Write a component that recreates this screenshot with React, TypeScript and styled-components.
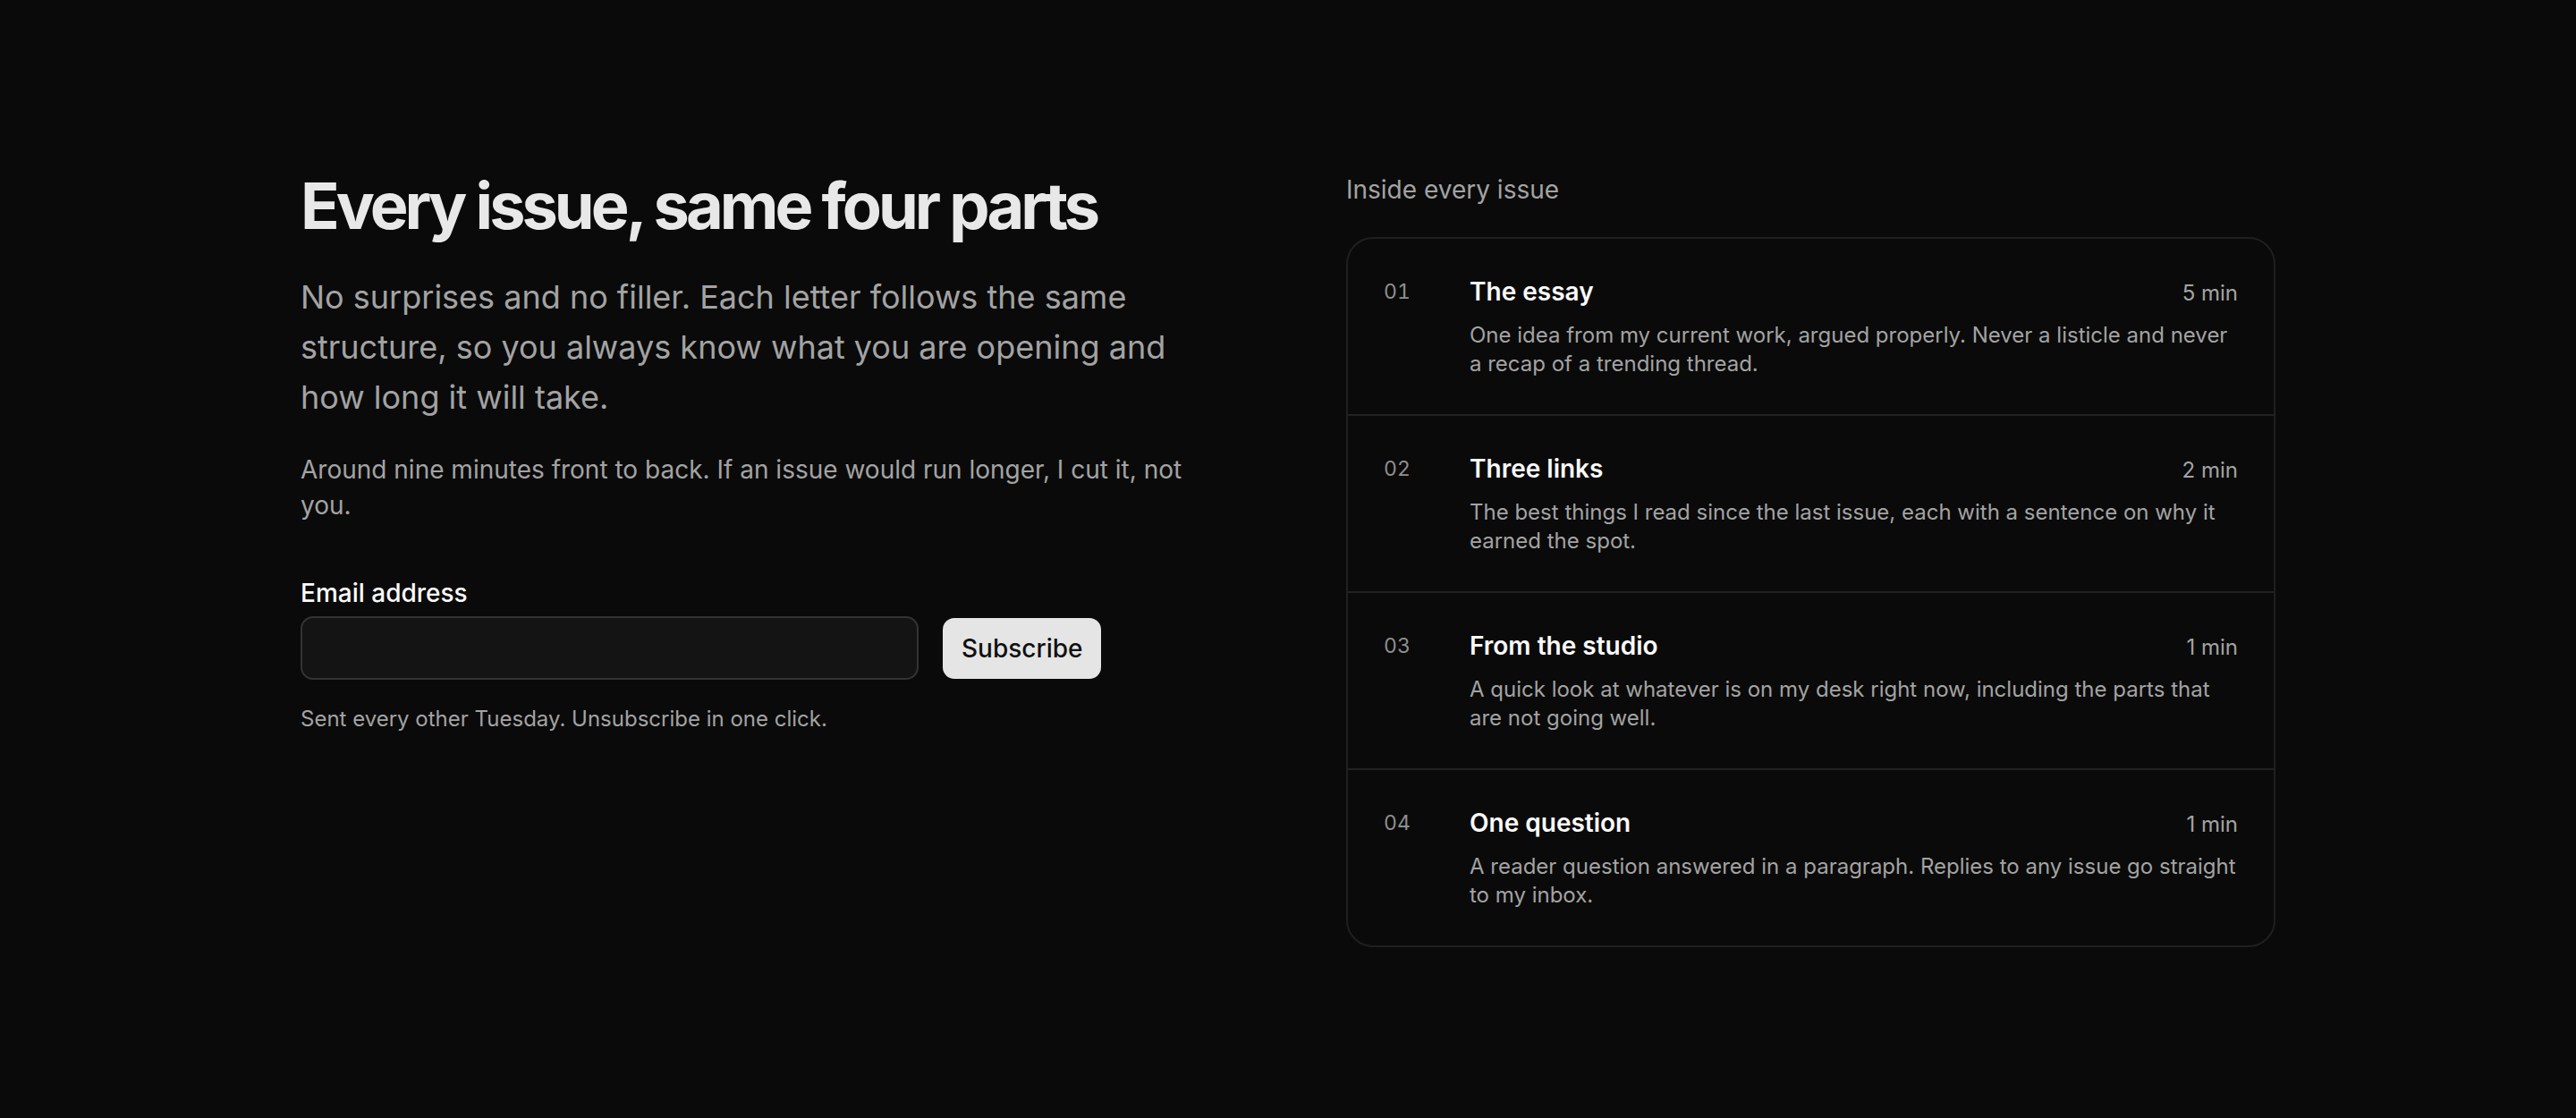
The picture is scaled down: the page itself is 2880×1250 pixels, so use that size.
import styled, { createGlobalStyle } from 'styled-components'

const GlobalStyle = createGlobalStyle`
  * {
    box-sizing: border-box;
  }

  body {
    margin: 0;
    background: #0a0a0a;
    font-family: Inter, "Noto Sans", sans-serif;
    -webkit-font-smoothing: antialiased;
  }
`

const sections = [
  {
    num: '01',
    title: 'The essay',
    time: '5 min',
    text: 'One idea from my current work, argued properly. Never a listicle and never a recap of a trending thread.',
  },
  {
    num: '02',
    title: 'Three links',
    time: '2 min',
    text: 'The best things I read since the last issue, each with a sentence on why it earned the spot.',
  },
  {
    num: '03',
    title: 'From the studio',
    time: '1 min',
    text: 'A quick look at whatever is on my desk right now, including the parts that are not going well.',
  },
  {
    num: '04',
    title: 'One question',
    time: '1 min',
    text: 'A reader question answered in a paragraph. Replies to any issue go straight to my inbox.',
  },
]

const Page = styled.main`
  min-height: 100vh;
  padding: 190px 0 120px;
`

const Layout = styled.div`
  width: 2208px;
  margin: 0 auto;
  display: grid;
  grid-template-columns: 1fr 1039px;
  gap: 130px;
  align-items: start;
`

const Intro = styled.section`
  display: flex;
  flex-direction: column;
`

const Headline = styled.h1`
  margin: 0;
  font-size: 72px;
  line-height: 1.1;
  font-weight: 700;
  letter-spacing: -0.055em;
  color: #e8e8e8;
`

const Lead = styled.p`
  margin: 35px 0 0;
  max-width: 1000px;
  font-size: 36px;
  line-height: 56px;
  color: #a3a3a3;
`

const Note = styled.p`
  margin: 33px 0 0;
  max-width: 1000px;
  font-size: 28px;
  line-height: 40px;
  color: #a3a3a3;
`

const Form = styled.form`
  margin-top: 60px;
  display: flex;
  flex-direction: column;
`

const Label = styled.label`
  font-size: 28px;
  line-height: 36px;
  font-weight: 500;
  color: #fafafa;
`

const FieldRow = styled.div`
  margin-top: 8px;
  display: flex;
  align-items: center;
  gap: 27px;
`

const EmailInput = styled.input`
  width: 691px;
  height: 71px;
  padding: 0 22px;
  border: 2px solid #333;
  border-radius: 14px;
  background: #141414;
  color: #fafafa;
  font: inherit;
  font-size: 28px;
  outline: none;
`

const SubscribeButton = styled.button`
  height: 68px;
  padding: 0 21px;
  border: 0;
  border-radius: 13px;
  background: #e5e5e5;
  color: #111;
  font-family: inherit;
  font-size: 28px;
  font-weight: 500;
  cursor: pointer;
`

const Fine = styled.p`
  margin: 27px 0 0;
  font-size: 24px;
  line-height: 34px;
  color: #a3a3a3;
`

const Outline = styled.section`
  display: flex;
  flex-direction: column;
`

const OutlineHeading = styled.h2`
  margin: 0 0 30px;
  font-size: 28px;
  line-height: 45px;
  font-weight: 400;
  color: #a3a3a3;
`

const Card = styled.ol`
  margin: 0;
  padding: 0;
  list-style: none;
  border: 2px solid #1f1f1f;
  border-radius: 30px;
  overflow: hidden;
`

const Item = styled.li`
  display: grid;
  grid-template-columns: 56px 1fr;
  column-gap: 40px;
  padding: 42px 40px 40px;

  & + & {
    border-top: 2px solid #222;
  }
`

const Num = styled.span`
  font-size: 23px;
  line-height: 35px;
  color: #8f8f8f;
  font-variant-numeric: tabular-nums;
`

const Body = styled.div`
  display: flex;
  flex-direction: column;
  gap: 14px;
`

const TitleRow = styled.div`
  display: flex;
  justify-content: space-between;
  align-items: baseline;
`

const Title = styled.h3`
  margin: 0;
  font-size: 28px;
  line-height: 35px;
  font-weight: 600;
  color: #fafafa;
`

const Time = styled.span`
  font-size: 24px;
  line-height: 35px;
  color: #a3a3a3;
`

const Desc = styled.p`
  margin: 0;
  font-size: 24px;
  line-height: 32px;
  color: #a3a3a3;
`

export default function App() {
  return (
    <>
      <GlobalStyle />
      <Page>
        <Layout>
          <Intro>
            <Headline>Every issue, same four parts</Headline>
            <Lead>
              No surprises and no filler. Each letter follows the same structure, so you always
              know what you are opening and how long it will take.
            </Lead>
            <Note>
              Around nine minutes front to back. If an issue would run longer, I cut it, not you.
            </Note>
            <Form onSubmit={(e) => e.preventDefault()}>
              <Label htmlFor="email">Email address</Label>
              <FieldRow>
                <EmailInput id="email" type="email" />
                <SubscribeButton type="submit">Subscribe</SubscribeButton>
              </FieldRow>
              <Fine>Sent every other Tuesday. Unsubscribe in one click.</Fine>
            </Form>
          </Intro>

          <Outline>
            <OutlineHeading>Inside every issue</OutlineHeading>
            <Card>
              {sections.map((s) => (
                <Item key={s.num}>
                  <Num>{s.num}</Num>
                  <Body>
                    <TitleRow>
                      <Title>{s.title}</Title>
                      <Time>{s.time}</Time>
                    </TitleRow>
                    <Desc>{s.text}</Desc>
                  </Body>
                </Item>
              ))}
            </Card>
          </Outline>
        </Layout>
      </Page>
    </>
  )
}
